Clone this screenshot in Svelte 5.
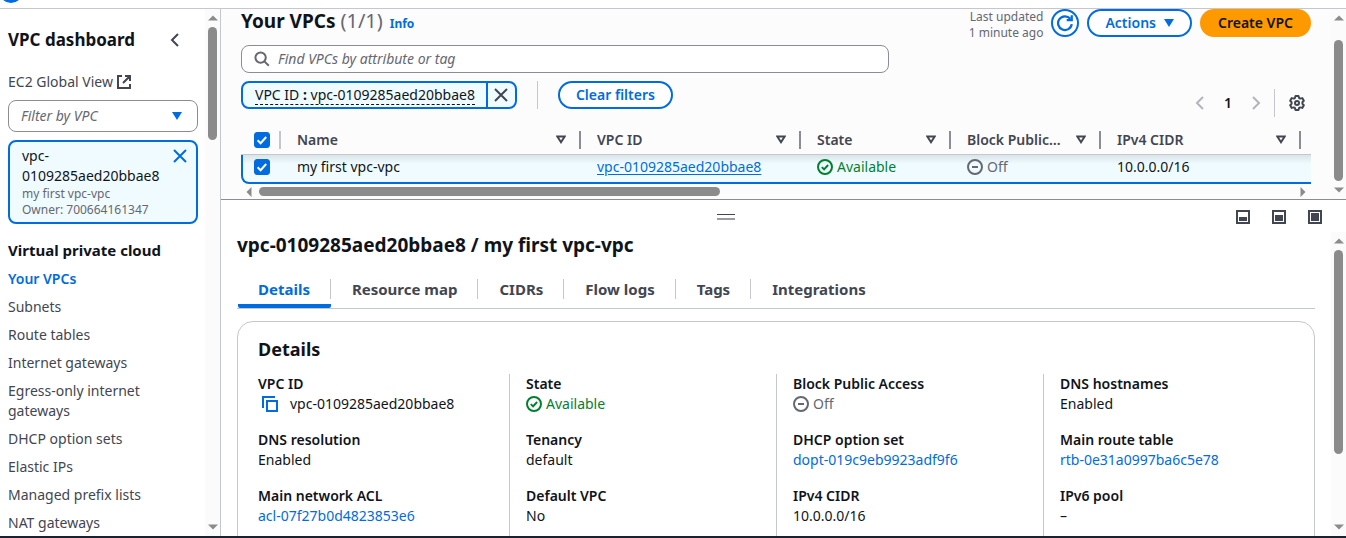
<script>
  const navItems = [
    'Your VPCs', 'Subnets', 'Route tables', 'Internet gateways', 'Egress-only internet gateways',
    'DHCP option sets', 'Elastic IPs', 'Managed prefix lists', 'NAT gateways'
  ];
  const tabs = ['Details', 'Resource map', 'CIDRs', 'Flow logs', 'Tags', 'Integrations'];
  const headers = ['Name', 'VPC ID', 'State', 'Block Public…', 'IPv4 CIDR'];
  const panelSizes = [4, 6, 8];
  const details = [
    [
      { label: 'VPC ID', value: 'vpc-0109285aed20bbae8', kind: 'copy' },
      { label: 'DNS resolution', value: 'Enabled' },
      { label: 'Main network ACL', value: 'acl-07f27b0d4823853e6', kind: 'link' }
    ],
    [
      { label: 'State', value: 'Available', kind: 'ok' },
      { label: 'Tenancy', value: 'default' },
      { label: 'Default VPC', value: 'No' }
    ],
    [
      { label: 'Block Public Access', value: 'Off', kind: 'off' },
      { label: 'DHCP option set', value: 'dopt-019c9eb9923adf9f6', kind: 'link' },
      { label: 'IPv4 CIDR', value: '10.0.0.0/16' }
    ],
    [
      { label: 'DNS hostnames', value: 'Enabled' },
      { label: 'Main route table', value: 'rtb-0e31a0997ba6c5e78', kind: 'link' },
      { label: 'IPv6 pool', value: '–' }
    ]
  ];
  let activeNav = $state('Your VPCs');
  let activeTab = $state('Details');
  let allSelected = $state(true);
</script>

{#snippet vbar(start, size)}
  <div class="vbar" aria-hidden="true">
    <svg class="arrow" width="10" height="6" viewBox="0 0 10 6"><path d="M0 5.5 5 .5l5 5z" /></svg>
    <div class="track"><div class="thumb" style:margin-top="{start}px" style:height="{size}%"></div></div>
    <svg class="arrow" width="10" height="6" viewBox="0 0 10 6"><path d="M0 .5 5 5.5l5-5z" /></svg>
  </div>
{/snippet}

{#snippet ok()}
  <span class="status ok">
    <svg width="16" height="16" viewBox="0 0 16 16"><circle cx="8" cy="8" r="7" /><path d="m4.8 8.1 2.3 2.3 4-4.4" /></svg>Available
  </span>
{/snippet}

{#snippet off()}
  <span class="status off">
    <svg width="16" height="16" viewBox="0 0 16 16"><circle cx="8" cy="8" r="7" /><path d="M5 8h6" /></svg>Off
  </span>
{/snippet}

{#snippet check(label)}
  <label class="check">
    <input type="checkbox" bind:checked={allSelected} aria-label={label} />
    <svg width="16" height="16" viewBox="0 0 16 16"><path d="m3.6 8.2 3 3L12.2 5" /></svg>
  </label>
{/snippet}

<div class="app">
  <div class="topbar">
    <svg width="24" height="8" viewBox="0 0 24 8"><circle cx="11" cy="-9" r="12" fill="#006ce0" /></svg>
  </div>

  <div class="body">
    <aside class="sidebar">
      <div class="side-content">
        <div class="side-head">
          <h2>VPC dashboard</h2>
          <button class="icon-btn" aria-label="Close navigation">
            <svg width="16" height="16" viewBox="0 0 16 16" stroke="#424650"><path d="M11 2 5 8l6 6" /></svg>
          </button>
        </div>
        <a class="ec2" href="#ec2">EC2 Global View
          <svg width="16" height="16" viewBox="0 0 16 16" stroke="#424650"><path d="M6 2H2v12h12v-4M9 2h5v5M14 2 7 9" /></svg>
        </a>
        <div class="select">
          <select aria-label="Filter by VPC"><option>Filter by VPC</option></select>
          <svg width="10" height="8" viewBox="0 0 10 8"><path class="solid" d="M0 0h10L5 8z" /></svg>
        </div>
        <div class="vpc-token">
          <div>
            <p>vpc-<br />0109285aed20bbae8</p>
            <small>my first vpc-vpc</small>
            <small>Owner: 700664161347</small>
          </div>
          <button class="icon-btn" aria-label="Remove VPC filter">
            <svg width="16" height="16" viewBox="0 0 16 16" stroke="#006ce0"><path d="m2 2 12 12M14 2 2 14" /></svg>
          </button>
        </div>
        <h3>Virtual private cloud</h3>
        <nav>
          {#each navItems as item}
            <a href="#{item}" class:active={activeNav === item} onclick={() => (activeNav = item)}>{item}</a>
          {/each}
        </nav>
      </div>
      {@render vbar(0, 23)}
    </aside>

    <main>
      <section class="list-pane">
        <div class="list">
          <div class="title-row">
            <h1>Your VPCs <span>(1/1)</span> <a href="#info">Info</a></h1>
            <div class="updated">Last updated<br />1 minute ago</div>
            <button class="btn round" aria-label="Refresh">
              <svg width="18" height="18" viewBox="0 0 16 16" stroke="#006ce0"><path d="M14 9a6.100 6.100 0 1 1-1.400-4.800M14 1v4.500H9.500" /></svg>
            </button>
            <button class="btn">Actions
              <svg class="caret" width="10" height="8" viewBox="0 0 10 8"><path class="solid" d="M0 0h10L5 8z" /></svg>
            </button>
            <button class="btn primary">Create VPC</button>
          </div>

          <div class="tools">
            <div class="filters">
              <label class="search">
                <svg width="16" height="16" viewBox="0 0 16 16" stroke="#656871"><circle cx="6.6" cy="6.6" r="5.2" /><path d="m10.4 10.4 4.4 4.4" /></svg>
                <input type="search" placeholder="Find VPCs by attribute or tag" aria-label="Find VPCs" />
              </label>
              <div class="applied">
                <div class="token">
                  <button class="token-text"><span>VPC ID <b>:</b> vpc-0109285aed20bbae8</span></button>
                  <button class="token-x" aria-label="Remove filter">
                    <svg width="16" height="16" viewBox="0 0 16 16" stroke="#424650"><path d="m2 2 12 12M14 2 2 14" /></svg>
                  </button>
                </div>
                <i class="sep"></i>
                <button class="btn">Clear filters</button>
              </div>
            </div>
            <div class="pages">
              <button class="icon-btn" aria-label="Previous page"><svg width="16" height="16" viewBox="0 0 16 16" stroke="#b4b4bb"><path d="M11 2 5 8l6 6" /></svg></button>
              <button class="icon-btn page">1</button>
              <button class="icon-btn" aria-label="Next page"><svg width="16" height="16" viewBox="0 0 16 16" stroke="#b4b4bb"><path d="m5 2 6 6-6 6" /></svg></button>
              <i class="sep"></i>
              <button class="icon-btn" aria-label="Preferences">
                <svg width="16" height="16" viewBox="0 0 16 16" stroke="#424650" stroke-linejoin="round"><path d="M6.5 1h3l.6 2 1.1.6 2.1-.5 1.5 2.6-1.4 1.5v1.6l1.4 1.5-1.5 2.6-2.1-.5-1.1.6-.6 2h-3l-.6-2-1.1-.6-2.1.5-1.5-2.6 1.400-1.500V7.200L1.200 5.700l1.500-2.600 2.100.5L5.900 3z" /><circle cx="8" cy="8" r="2" /></svg>
              </button>
            </div>
          </div>

          <div class="table-wrap">
            <table>
              <colgroup><col class="c0" /><col class="c1" /><col class="c2" /><col class="c3" /><col class="c3" /><col class="c4" /><col /></colgroup>
              <thead>
                <tr>
                  <th class="sel"><div>{@render check('Select all')}</div></th>
                  {#each headers as h}
                    <th><div>{h}
                      <svg width="10" height="9" viewBox="0 0 10 9" stroke="#424650"><path d="M1.300 1.500h7.400L5 7.200z" /></svg>
                    </div></th>
                  {/each}
                  <th></th>
                </tr>
              </thead>
              <tbody>
                <tr>
                  <td class="sel">{@render check('Select my first vpc-vpc')}</td>
                  <td>my first vpc-vpc</td>
                  <td><a class="under" href="#vpc">vpc-0109285aed20bbae8</a></td>
                  <td>{@render ok()}</td>
                  <td>{@render off()}</td>
                  <td>10.0.0.0/16</td>
                  <td></td>
                </tr>
              </tbody>
            </table>
          </div>
          <div class="hbar" aria-hidden="true">
            <svg class="arrow" width="6" height="10" viewBox="0 0 6 10"><path d="M5.500 0 .5 5l5 5z" /></svg>
            <div class="track"><div class="thumb" style:width="44.6%"></div></div>
            <svg class="arrow" width="6" height="10" viewBox="0 0 6 10"><path d="M.5 0l5 5-5 5z" /></svg>
          </div>
        </div>
        {@render vbar(13, 100)}
      </section>

      <section class="split">
        <div class="split-bar">
          <button class="handle" aria-label="Resize panel"></button>
          <div class="sizes">
            {#each panelSizes as h}
              <button class="icon-btn" aria-label="Panel size {h}">
                <svg width="14" height="14" viewBox="0 0 14 14" stroke="#424650"><rect x="1" y="1" width="12" height="12" /><rect class="dark" x="3" y={11 - h} width="8" height={h} /></svg>
              </button>
            {/each}
          </div>
        </div>
        <div class="split-body">
          <div class="split-content">
            <h2>vpc-0109285aed20bbae8 / my first vpc-vpc</h2>
            <div class="tabs" role="tablist">
              {#each tabs as tab}
                <button role="tab" class:active={activeTab === tab} aria-selected={activeTab === tab} onclick={() => (activeTab = tab)}><span>{tab}</span></button>
              {/each}
            </div>
            <div class="card">
              <h2>Details</h2>
              <div class="cols">
                {#each details as col}
                  <dl>
                    {#each col as d}
                      <div>
                        <dt>{d.label}</dt>
                        <dd>
                          {#if d.kind === 'link'}<a href="#{d.value}">{d.value}</a>
                          {:else if d.kind === 'ok'}{@render ok()}
                          {:else if d.kind === 'off'}{@render off()}
                          {:else if d.kind === 'copy'}
                            <span class="copy"><button class="icon-btn" aria-label="Copy VPC ID"><svg width="16" height="16" viewBox="0 0 16 16" stroke="#006ce0"><path d="M1 12V1h12" /><path d="M5 5h10v10H5z" /></svg></button>{d.value}</span>
                          {:else}{d.value}{/if}
                        </dd>
                      </div>
                    {/each}
                  </dl>
                {/each}
              </div>
            </div>
          </div>
          {@render vbar(0, 76)}
        </div>
      </section>
    </main>
  </div>
</div>

<style>
  :global(body) { margin: 0; }
  .app {
    height: 100vh; box-sizing: border-box; display: flex; flex-direction: column; overflow: hidden;
    border-bottom: 2px solid #1b2130; background: #fff; color: #0f141a;
    font-family: "Noto Sans", "Open Sans", sans-serif; font-size: 14px; line-height: 20px;
  }
  .app * { box-sizing: border-box; }
  button, input, select { font: inherit; color: inherit; margin: 0; padding: 0; border: 0; background: none; }
  h1, h2, h3, p, dl, dd { margin: 0; }
  a { color: #006ce0; text-decoration: none; }
  svg { display: block; flex: none; fill: none; stroke-width: 2; }
  h1, h2 { font-size: 19px; line-height: 24px; font-weight: 700; }

  .topbar { flex: none; height: 9px; border-bottom: 1px solid #c6c6cd; }
  .body { flex: 1; display: flex; min-height: 0; }
  .icon-btn { display: flex; align-items: center; justify-content: center; flex: none; }

  .vbar { flex: none; width: 15px; display: flex; flex-direction: column; align-items: center; padding: 6px 0; background: #fbfbfb; }
  .arrow { fill: #8b8b8b; }
  .vbar .track { flex: 1; min-height: 0; margin: 6px 0; overflow: hidden; }
  .vbar .thumb { width: 9px; max-height: calc(100% - 13px); border-radius: 5px; background: #8b8b8b; }
  .hbar { display: flex; align-items: center; height: 15px; padding: 0 5px; }
  .hbar .track { flex: 1; margin: 0 7px; }
  .hbar .thumb { height: 9px; border-radius: 5px; background: #8b8b8b; }

  .sidebar { flex: none; width: 221px; display: flex; border-right: 1px solid #c6c6cd; }
  .side-content { flex: 1; min-width: 0; padding: 19px 7px 0 8px; overflow: hidden; }
  .side-head { display: flex; justify-content: space-between; padding-right: 15px; }
  .side-head h2 { font-size: 17px; }
  .ec2 { display: flex; align-items: center; gap: 3px; margin-top: 20px; color: #424650; }
  .select { display: grid; align-items: center; height: 32px; margin-top: 8px; border: 1px solid #8c8c94; border-radius: 8px; background: #fff; }
  .select > * { grid-area: 1 / 1; }
  .select select { appearance: none; width: 100%; height: 100%; padding: 0 12px; font-style: italic; color: #656871; }
  .select svg { justify-self: end; margin-right: 15px; pointer-events: none; }
  .solid { fill: #006ce0; stroke: none; }
  .vpc-token { display: flex; justify-content: space-between; align-items: flex-start; margin-top: 8px; padding: 4px 8px 4px 12px; border: 2px solid #006ce0; border-radius: 8px; background: #f0fbff; }
  .vpc-token small { display: block; font-size: 12px; line-height: 16px; color: #656871; }
  .vpc-token .icon-btn { width: 16px; height: 20px; }
  h3 { margin-top: 16px; font-size: 15px; line-height: 20px; font-weight: 700; }
  nav { display: flex; flex-direction: column; gap: 8px; padding-top: 9px; }
  nav a { max-width: 150px; color: #424650; }
  nav .active { color: #006ce0; font-weight: 600; }

  main { flex: 1; min-width: 0; display: grid; grid-template-rows: minmax(0, 191fr) minmax(0, 336fr); }
  .list-pane { display: flex; min-height: 0; border-bottom: 1px solid #8c8c94; background: #fcfcfd; }
  .list { flex: 1; min-width: 0; padding: 0 20px; }
  .title-row { display: flex; align-items: flex-start; gap: 8px; height: 36px; }
  .title-row h1 { flex: 1; }
  h1 span { font-size: 20px; font-weight: 400; color: #656871; }
  h1 a { margin-left: 2px; font-size: 12px; }
  .updated { font-size: 12px; line-height: 16px; text-align: right; color: #656871; }
  .btn { display: flex; align-items: center; height: 28px; padding: 0 16px; border: 2px solid #006ce0; border-radius: 20px; background: #fff; color: #006ce0; font-weight: 600; white-space: nowrap; }
  .btn .caret { margin-left: 8px; }
  .round { width: 28px; padding: 0; justify-content: center; }
  .primary { border-color: #f90; background: #f90; color: #0f141a; }

  .tools { display: grid; grid-template-columns: 20fr 13fr; align-items: end; }
  .filters { display: flex; flex-direction: column; gap: 8px; padding-bottom: 8px; }
  .search { display: flex; align-items: center; gap: 8px; height: 28px; padding: 0 12px; border: 1px solid #8c8c94; border-radius: 8px; background: #fff; }
  .search input { flex: 1; min-width: 0; outline: 0; }
  .search input::placeholder { color: #656871; font-style: italic; opacity: 1; }
  .applied { display: flex; gap: 20px; }
  .token { display: flex; height: 28px; border: 2px solid #006ce0; border-radius: 8px; background: #f0fbff; }
  .token-text { padding: 0 11px 0 12px; }
  .token-text span { display: block; line-height: 18px; border-bottom: 1px dashed #0f141a; }
  .token-x { display: flex; align-items: center; padding: 0 6px 0 5px; border-left: 2px solid #006ce0; }
  .sep { width: 1px; height: 28px; background: #c6c6cd; }
  .pages { display: flex; justify-content: flex-end; align-items: center; height: 28px; padding-right: 6px; }
  .pages .icon-btn { width: 16px; margin-right: 12px; }
  .pages .sep { margin: 0 14px 0 -2px; }
  .pages .icon-btn:last-child { margin-right: 0; }
  .page { font-weight: 600; }

  .table-wrap { overflow: hidden; padding-top: 8px; }
  table { width: 100%; table-layout: fixed; border-collapse: separate; border-spacing: 0; }
  .c0 { width: 40px; } .c1 { width: 300px; } .c2 { width: 220px; } .c3 { width: 150px; } .c4 { width: 200px; }
  th { height: 30px; padding: 0; border-bottom: 1px solid #c6c6cd; text-align: left; font-weight: 600; color: #424650; }
  th div { display: flex; align-items: center; justify-content: space-between; height: 18px; padding: 0 13px 0 16px; border-right: 2px solid #8c8c94; white-space: nowrap; }
  th.sel div { padding-left: 13px; border-color: #c6c6cd; }
  td { height: 29px; padding: 0 0 4px 16px; border-bottom: 2px solid #006ce0; background: linear-gradient(#dae5ea, #f0fbff 9px); }
  td.sel { padding-left: 11px; border-left: 2px solid #006ce0; border-bottom-left-radius: 8px; }
  td:last-child { padding: 0; }
  .under { text-decoration: underline; text-underline-offset: 2px; }
  .check { display: grid; width: 16px; height: 16px; }
  .check > * { grid-area: 1 / 1; }
  .check input { appearance: none; width: 16px; height: 16px; border: 1px solid #8c8c94; border-radius: 3px; background: #fff; }
  .check input:checked { border-color: #006ce0; background: #006ce0; }
  .check svg { stroke: #fff; pointer-events: none; }
  .status { display: flex; align-items: center; gap: 4px; }
  .ok { color: #00802f; } .ok svg { stroke: #00802f; }
  .off { color: #656871; } .off svg { stroke: #656871; }

  .split { display: flex; flex-direction: column; min-height: 0; }
  .split-bar { flex: none; display: grid; grid-template-columns: 1fr auto; height: 32px; padding-right: 24px; }
  .handle { justify-self: center; width: 18px; height: 6px; margin-top: 14px; border-top: 1px solid #424650; border-bottom: 2px solid #9b9ba5; }
  .sizes { display: flex; align-items: center; gap: 22px; padding: 2px 0 0 6px; }
  .dark { fill: #424650; stroke: none; }
  .split-body { flex: 1; display: flex; min-height: 0; }
  .split-content { flex: 1; min-width: 0; padding: 1px 16px 0; overflow: hidden; }
  .tabs { display: flex; gap: 1px; margin-top: 20px; padding-left: 1px; border-bottom: 1px solid #c6c6cd; }
  .tabs button { height: 31px; padding: 2px 0 9px; font-size: 15px; line-height: 20px; font-weight: 700; color: #424650; }
  .tabs span { display: block; padding: 0 20px; border-right: 1px solid #c6c6cd; }
  .tabs button:last-child span { border-color: transparent; }
  .tabs .active { padding-bottom: 5px; border-bottom: 4px solid #006ce0; color: #006ce0; border-radius: 2px; }
  .card { margin-top: 12px; padding: 15px 20px 20px; border: 1px solid #c6c6cd; border-radius: 16px; }
  .card h2 { font-size: 18px; }
  .cols { display: grid; grid-template-columns: repeat(4, minmax(0, 1fr)); gap: 16px; margin: 13px 0 0 -16px; }
  dl { display: flex; flex-direction: column; gap: 16px; padding: 0 0 56px 16px; border-left: 1px solid #c6c6cd; }
  dl:first-child { border-left: 0; }
  dt { font-weight: 600; }
  .copy { display: flex; gap: 12px; padding-left: 4px; }
</style>
